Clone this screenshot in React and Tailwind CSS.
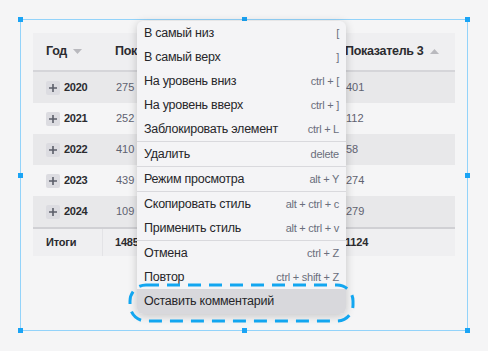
import React from 'react';

// column 2 sits under the context menu, so its cells stay empty
const rows = [
    { year: '2020', a: '275', c: '401', shaded: true },
    { year: '2021', a: '252', c: '112', shaded: false },
    { year: '2022', a: '410', c: '58', shaded: true },
    { year: '2023', a: '439', c: '274', shaded: false },
    { year: '2024', a: '109', c: '279', shaded: true },
];

const menu = [
    [
        ['В самый низ', '['],
        ['В самый верх', ']'],
        ['На уровень вниз', 'ctrl + ['],
        ['На уровень вверх', 'ctrl + ]'],
        ['Заблокировать элемент', 'ctrl + L'],
    ],
    [['Удалить', 'delete']],
    [['Режим просмотра', 'alt + Y']],
    [
        ['Скопировать стиль', 'alt + ctrl + c'],
        ['Применить стиль', 'alt + ctrl + v'],
    ],
    [
        ['Отмена', 'ctrl + Z'],
        ['Повтор', 'ctrl + shift + Z'],
    ],
];

const handles = [
    'left-[18px] top-[17px]',
    'left-[242px] top-[17px]',
    'left-[465px] top-[17px]',
    'left-[18px] top-[173px]',
    'left-[465px] top-[173px]',
    'left-[18px] top-[328px]',
    'left-[242px] top-[328px]',
    'left-[465px] top-[328px]',
];

const Caret = ({ up }) => (
    <svg width="9" height="5" viewBox="0 0 9 5" className="ml-[6px]">
        <path d={up ? 'M0 5 L4.5 0 L9 5 Z' : 'M0 0 L4.5 5 L9 0 Z'} fill="#b9b9be" />
    </svg>
);

const PlusBox = () => (
    <span className="flex h-[14px] w-[14px] items-center justify-center rounded-[2px] bg-[#dcdce1]">
        <svg width="8" height="8" viewBox="0 0 8 8">
            <path d="M4 0 V8 M0 4 H8" stroke="#5b5e69" strokeWidth="1.6" />
        </svg>
    </span>
);

const App = () => {
    return (
        <div className="relative h-[351px] w-[488px] overflow-hidden bg-[#f5f5f6] pl-[20px] pt-[19px] font-['Liberation_Sans',Arial,sans-serif]">
            <div className="h-[312px] w-[448px] border border-[#93d3fa] pl-[12px] pt-[13px]">
                <div className="w-[422px] text-[#2b2b2f]">
                    <div className="flex h-[39px] items-center border-b-2 border-[#d5d5d9] bg-[#efeff1] text-[12.5px] font-bold tracking-[-0.3px]">
                        <div className="flex w-[70px] items-center pl-[13px]">Год<Caret /></div>
                        <div className="w-[115px] pl-[12px]">Показатель 1</div>
                        <div className="w-[115px] pl-[12px]" />
                        <div className="flex w-[122px] items-center pl-[12px]">Показатель 3<Caret up /></div>
                    </div>
                    {rows.map((r) => (
                        <div key={r.year} className={`flex h-[31px] items-center text-[11px] ${r.shaded ? 'bg-[#e8e8ea]' : 'bg-[#f5f5f6]'}`}>
                            <div className="flex w-[70px] items-center gap-[4px] pl-[13px] font-bold tracking-[-0.3px] text-[#2b2b2f]">
                                <PlusBox />
                                {r.year}
                            </div>
                            <div className="w-[115px] pl-[13px] text-[#5f6270]">{r.a}</div>
                            <div className="w-[115px]" />
                            <div className="w-[122px] pl-[13px] text-[#5f6270]">{r.c}</div>
                        </div>
                    ))}
                    <div className="flex h-[29px] items-stretch border-t-2 border-[#d0d0d4] bg-[#efeff1] text-[11px] font-bold tracking-[-0.2px]">
                        <div className="flex w-[70px] items-center border-r border-[#e3e3e6] pl-[13px]">Итоги</div>
                        <div className="flex w-[115px] items-center pl-[12px]">1485</div>
                        <div className="w-[115px]" />
                        <div className="flex w-[122px] items-center pl-[12px]">1124</div>
                    </div>
                </div>
            </div>

            {handles.map((h) => (
                <span key={h} className={`absolute h-[5px] w-[5px] bg-[#1aa4f5] ${h}`} />
            ))}

            <div className="absolute left-[137px] top-[21px] w-[209px] rounded-[6px] bg-[#f4f4f6] shadow-[0_2px_10px_rgba(0,0,0,0.2)]">
                {menu.map((group, gi) => (
                    <div key={gi} className={gi > 0 ? 'border-t border-[#d9d9dd]' : ''}>
                        {group.map(([label, key]) => (
                            <div key={label} className="flex h-[24px] items-center justify-between px-[7px]">
                                <span className="text-[12.5px] tracking-[-0.25px] text-[#26262a]">{label}</span>
                                <span className="text-[11px] tracking-[-0.25px] text-[#6a6e7c]">{key}</span>
                            </div>
                        ))}
                    </div>
                ))}
                <div className="flex h-[25px] items-center rounded-b-[6px] bg-[#d8d8dc] px-[7px] text-[12.5px] tracking-[-0.25px] text-[#26262a]">
                    Оставить комментарий
                </div>
            </div>

            <svg className="absolute left-[128px] top-[283px]" width="227" height="40" viewBox="0 0 227 40">
                <rect x="2" y="2" width="223" height="36" rx="16" fill="none" stroke="#12a6f0" strokeWidth="3" strokeDasharray="13 8" />
            </svg>
        </div>
    );
};

export default App;
